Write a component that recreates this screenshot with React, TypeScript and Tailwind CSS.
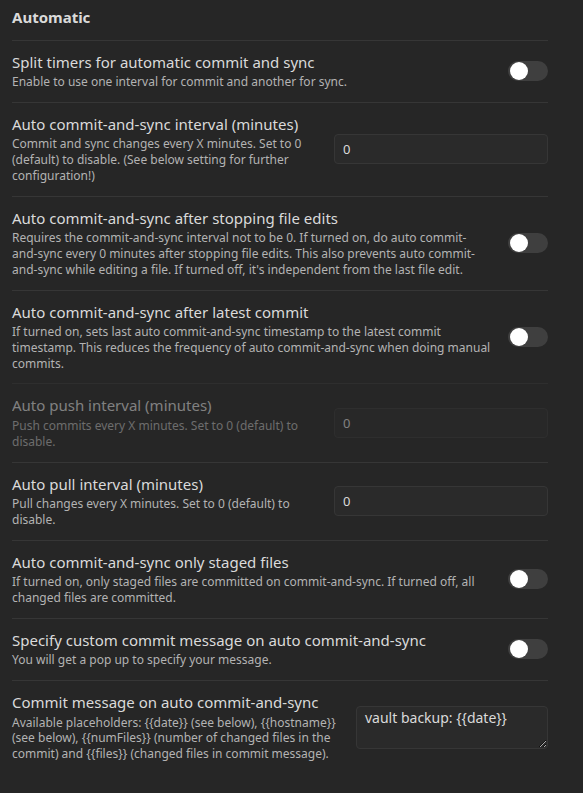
const font = { fontFamily: '"Noto Sans", "Open Sans", sans-serif' };

type Row =
  | { kind: 'toggle'; name: string; desc: string }
  | { kind: 'input'; name: string; desc: string; value: string; disabled?: boolean }
  | { kind: 'textarea'; name: string; desc: string; value: string };

const rows: Row[] = [
  {
    kind: 'toggle',
    name: 'Split timers for automatic commit and sync',
    desc: 'Enable to use one interval for commit and another for sync.',
  },
  {
    kind: 'input',
    name: 'Auto commit-and-sync interval (minutes)',
    desc: 'Commit and sync changes every X minutes. Set to 0 (default) to disable. (See below setting for further configuration!)',
    value: '0',
  },
  {
    kind: 'toggle',
    name: 'Auto commit-and-sync after stopping file edits',
    desc: "Requires the commit-and-sync interval not to be 0. If turned on, do auto commit-and-sync every 0 minutes after stopping file edits. This also prevents auto commit-and-sync while editing a file. If turned off, it's independent from the last file edit.",
  },
  {
    kind: 'toggle',
    name: 'Auto commit-and-sync after latest commit',
    desc: 'If turned on, sets last auto commit-and-sync timestamp to the latest commit timestamp. This reduces the frequency of auto commit-and-sync when doing manual commits.',
  },
  {
    kind: 'input',
    name: 'Auto push interval (minutes)',
    desc: 'Push commits every X minutes. Set to 0 (default) to disable.',
    value: '0',
    disabled: true,
  },
  {
    kind: 'input',
    name: 'Auto pull interval (minutes)',
    desc: 'Pull changes every X minutes. Set to 0 (default) to disable.',
    value: '0',
  },
  {
    kind: 'toggle',
    name: 'Auto commit-and-sync only staged files',
    desc: 'If turned on, only staged files are committed on commit-and-sync. If turned off, all changed files are committed.',
  },
  {
    kind: 'toggle',
    name: 'Specify custom commit message on auto commit-and-sync',
    desc: 'You will get a pop up to specify your message.',
  },
  {
    kind: 'textarea',
    name: 'Commit message on auto commit-and-sync',
    desc: 'Available placeholders: {{date}} (see below), {{hostname}} (see below), {{numFiles}} (number of changed files in the commit) and {{files}} (changed files in commit message).',
    value: 'vault backup: {{date}}',
  },
];

const Toggle = () => (
  <div className="relative h-[20px] w-[40px] rounded-full bg-[#3f3f3f]">
    <div className="absolute left-[2px] top-[1px] h-[18px] w-[18px] rounded-full bg-white" />
  </div>
);

const Setting = ({ row }: { row: Row }) => {
  const disabled = row.kind === 'input' && row.disabled;
  return (
    <div className={`flex items-center border-t border-[#363636] py-3 ${disabled ? 'opacity-50' : ''}`}>
      <div className="mr-[17px] flex-1">
        <div className="text-[15px] leading-[1.3] text-[#dadada]">{row.name}</div>
        <div className="pt-[2px] text-[12px] leading-[15.8px] text-[#b3b3b3]">{row.desc}</div>
      </div>
      <div className="flex shrink-0 justify-end">
        {row.kind === 'toggle' && <Toggle />}
        {row.kind === 'input' && (
          <input
            readOnly
            value={row.value}
            className="h-[30px] w-[214px] rounded-[4px] border border-[#363636] bg-[#2a2a2a] px-2 text-[13px] text-[#dadada] outline-none"
            style={font}
          />
        )}
        {row.kind === 'textarea' && (
          <textarea
            readOnly
            value={row.value}
            className="h-[43px] w-[192px] rounded-[4px] border border-[#363636] bg-[#2a2a2a] px-2 py-[2px] text-[14px] leading-[1.3] text-[#dadada] outline-none"
            style={font}
          />
        )}
      </div>
    </div>
  );
};

export default function App() {
  return (
    <div className="min-h-screen bg-[#262626] pl-3 pr-[35px]" style={font}>
      <div className="pb-3 pt-[8px] text-[15px] font-bold leading-[1.3] text-[#dadada]">Automatic</div>
      {rows.map((row) => (
        <Setting key={row.name} row={row} />
      ))}
    </div>
  );
}
